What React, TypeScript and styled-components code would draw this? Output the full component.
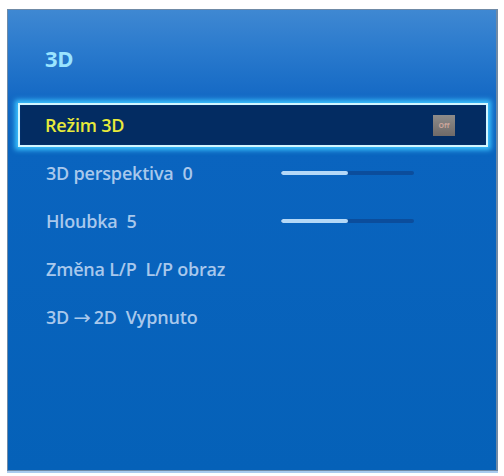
import styled, { createGlobalStyle } from "styled-components";

const Global = createGlobalStyle`
  html, body {
    margin: 0;
    padding: 0;
    background: #ffffff;
  }
  body {
    font-family: "Open Sans", "Noto Sans", sans-serif;
  }
`;

const Page = styled.div`
  width: 504px;
  height: 476px;
  padding: 9px 0 0 7px;
  box-sizing: border-box;
`;

const Panel = styled.div`
  width: 491px;
  height: 462px;
  box-sizing: border-box;
  border: 1px solid #6f8aa6;
  border-right-width: 2px;
  background: linear-gradient(
    to bottom,
    #3f88d2 0px,
    #2a7acd 40px,
    #1368c4 90px,
    #0a64bf 140px,
    #0561b8 100%
  );
  display: flex;
  flex-direction: column;
  box-shadow: 0 2px 0 #a9cbef;
`;

const Header = styled.div`
  height: 91px;
  display: flex;
  align-items: center;
  padding: 5px 0 0 37px;
  box-sizing: border-box;
`;

const Title = styled.h1`
  margin: 0;
  font-size: 22px;
  font-weight: 700;
  color: #9ae4ff;
  letter-spacing: -0.3px;
`;

const List = styled.div`
  display: flex;
  flex-direction: column;
  padding: 0 8px 0 10px;
`;

const Row = styled.div<{ $selected?: boolean }>`
  height: ${(p) => (p.$selected ? "44px" : "48px")};
  display: flex;
  align-items: center;
  padding-left: ${(p) => (p.$selected ? "25px" : "28px")};
  padding-right: 28px;
  box-sizing: border-box;
  background: ${(p) => (p.$selected ? "#032c62" : "transparent")};
  border: ${(p) => (p.$selected ? "2px solid #d2f6ff" : "none")};
  box-shadow: ${(p) =>
    p.$selected ? "0 0 5px 3px #3cc4ff, inset 0 0 2px #0a3b7a" : "none"};
  margin: ${(p) => (p.$selected ? "2px 0 2px 0" : "0")};
`;

const Label = styled.span<{ $selected?: boolean }>`
  font-size: 18px;
  font-weight: 600;
  letter-spacing: -0.2px;
  color: ${(p) => (p.$selected ? "#e8ea3a" : "#a8c8ec")};
  white-space: pre;
  flex: 1;
`;

const Arrow = styled.span`
  font-family: "DejaVu Sans", sans-serif;
  font-weight: 400;
  font-size: 19px;
  display: inline-block;
  transform: scaleX(1.1);
`;

const SliderTrack = styled.div`
  width: 133px;
  height: 4px;
  border-radius: 2px;
  background: #0b4d9c;
  margin-right: 46px;
  overflow: hidden;
`;

const SliderFill = styled.div`
  height: 100%;
  background: #b4d8f7;
  border-radius: 2px;
`;

const OffBadge = styled.div`
  width: 22px;
  height: 21px;
  background: linear-gradient(#8e8c8a, #6f6a68);
  color: #c9a49a;
  font-size: 7px;
  font-weight: 700;
  display: flex;
  align-items: center;
  justify-content: center;
  margin-right: 3px;
`;

interface Item {
  label: React.ReactNode;
  key: string;
  slider?: number;
}

const items: Item[] = [
  { key: "persp", label: "3D perspektiva  0", slider: 0.5 },
  { key: "depth", label: "Hloubka  5", slider: 0.5 },
  { key: "lr", label: "Změna L/P  L/P obraz" },
  {
    key: "2d",
    label: (
      <>
        3D <Arrow>→</Arrow> 2D  Vypnuto
      </>
    ),
  },
];

export default function App() {
  return (
    <>
      <Global />
      <Page>
        <Panel>
          <Header>
            <Title>3D</Title>
          </Header>
          <List>
            <Row $selected>
              <Label $selected>Režim 3D</Label>
              <OffBadge>Off</OffBadge>
            </Row>
            {items.map((it) => (
              <Row key={it.key}>
                <Label>{it.label}</Label>
                {it.slider !== undefined && (
                  <SliderTrack>
                    <SliderFill style={{ width: `${it.slider * 100}%` }} />
                  </SliderTrack>
                )}
              </Row>
            ))}
          </List>
        </Panel>
      </Page>
    </>
  );
}
